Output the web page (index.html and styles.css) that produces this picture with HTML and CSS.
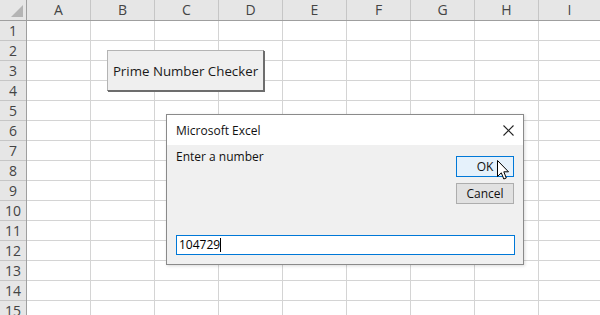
FILE: index.html
```html
<!DOCTYPE html>
<html lang="en">
<head>
    <meta charset="UTF-8">
    <title>Prime Number Checker</title>
    <link rel="stylesheet" href="styles.css">
</head>
<body>
    <div class="sheet">
        <div class="corner"><span class="corner-mark"></span></div>
        <div class="col-heads">
            <div class="col-head">A</div>
            <div class="col-head">B</div>
            <div class="col-head">C</div>
            <div class="col-head">D</div>
            <div class="col-head">E</div>
            <div class="col-head">F</div>
            <div class="col-head">G</div>
            <div class="col-head">H</div>
            <div class="col-head last">I</div>
        </div>
        <div class="row-heads">
            <div class="row-head">1</div>
            <div class="row-head">2</div>
            <div class="row-head">3</div>
            <div class="row-head">4</div>
            <div class="row-head">5</div>
            <div class="row-head">6</div>
            <div class="row-head">7</div>
            <div class="row-head">8</div>
            <div class="row-head">9</div>
            <div class="row-head">10</div>
            <div class="row-head">11</div>
            <div class="row-head">12</div>
            <div class="row-head">13</div>
            <div class="row-head">14</div>
            <div class="row-head">15</div>
        </div>
        <div class="cells"></div>

        <button class="macro-btn" type="button">Prime Number Checker</button>

        <div class="dialog">
            <div class="dlg-title">
                <span>Microsoft Excel</span>
                <svg class="dlg-close" width="11" height="11" viewBox="0 0 11 11">
                    <path d="M0.5 0.5 L10.5 10.5 M10.5 0.5 L0.5 10.5" stroke="#222" stroke-width="1.1" fill="none"/>
                </svg>
            </div>
            <div class="dlg-body">
                <div class="dlg-top">
                    <div class="prompt">Enter a number</div>
                    <div class="dlg-buttons">
                        <div class="dlg-btn ok">OK</div>
                        <div class="dlg-btn">Cancel</div>
                    </div>
                </div>
                <div class="dlg-input">104729<span class="caret"></span></div>
            </div>
            <svg class="pointer" width="13" height="21" viewBox="0 0 13 21">
                <path d="M0.5 0.5 L0.5 16.5 L4.3 12.8 L6.8 19 L9.3 18 L6.8 11.8 L11.5 11.8 Z" fill="#fff" stroke="#000" stroke-width="1" stroke-linejoin="miter"/>
            </svg>
        </div>
    </div>
</body>
</html>
```

FILE: styles.css
```css
body {
    margin: 0;
    background-color: #ffffff;
    font-family: "Open Sans", "Noto Sans", sans-serif;
    overflow: hidden;
}
.sheet {
    position: relative;
    display: grid;
    grid-template-columns: 27px 1fr;
    grid-template-rows: 21px 294px;
    width: 600px;
    height: 315px;
    overflow: hidden;
}
.corner {
    position: relative;
    background-color: #e6e6e6;
    border-right: 1px solid #9f9f9f;
    border-bottom: 1px solid #9f9f9f;
    box-sizing: border-box;
}
.corner-mark {
    position: absolute;
    right: 3px;
    bottom: 3px;
    width: 0;
    height: 0;
    border-left: 12px solid transparent;
    border-bottom: 12px solid #b4b4b4;
}
.col-heads {
    display: flex;
    background-color: #e6e6e6;
    border-bottom: 1px solid #9f9f9f;
}
.col-head {
    flex: 0 0 64px;
    box-sizing: border-box;
    border-right: 1px solid #c6c6c6;
    text-align: center;
    font-size: 14px;
    line-height: 20px;
    color: #444;
}
.col-head.last {
    flex: 1;
    border-right: none;
}
.row-heads {
    display: flex;
    flex-direction: column;
    background-color: #e6e6e6;
    border-right: 1px solid #9f9f9f;
    overflow: hidden;
}
.row-head {
    flex: 0 0 20px;
    box-sizing: border-box;
    border-bottom: 1px solid #c6c6c6;
    text-align: center;
    font-size: 14px;
    line-height: 19px;
    color: #444;
}
.cells {
    background-image:
        linear-gradient(to right, transparent 63px, #d4d4d4 63px),
        linear-gradient(to bottom, transparent 19px, #d4d4d4 19px);
    background-size: 64px 20px;
}
.macro-btn {
    position: absolute;
    left: 107px;
    top: 50px;
    width: 157px;
    height: 41px;
    padding: 0;
    background-color: #efefef;
    border: 1px solid #b4b4b4;
    border-right-color: #6d6d6d;
    border-bottom-color: #6d6d6d;
    box-shadow: 1px 1px 0 #6d6d6d;
    font-family: "Open Sans", sans-serif;
    font-size: 13.3px;
    color: #1a1a1a;
}
.dialog {
    position: absolute;
    left: 166px;
    top: 114px;
    width: 358px;
    height: 151px;
    box-sizing: border-box;
    border: 1px solid #8a8a8a;
    background-color: #f0f0f0;
    box-shadow: 1px 1px 3px rgba(0, 0, 0, 0.15);
    font-family: "Open Sans", sans-serif;
    font-size: 12px;
    color: #111;
    display: flex;
    flex-direction: column;
}
.dlg-title {
    height: 30px;
    background-color: #ffffff;
    display: flex;
    align-items: center;
    justify-content: space-between;
    padding: 0 9px 0 9px;
}
.dlg-body {
    flex: 1;
    display: flex;
    flex-direction: column;
    padding: 3px 8px 9px 9px;
}
.dlg-top {
    display: flex;
    justify-content: space-between;
}
.prompt {
    line-height: 18px;
}
.dlg-buttons {
    display: flex;
    flex-direction: column;
    gap: 6px;
    margin-top: 8px;
    margin-right: 1px;
}
.dlg-btn {
    width: 58px;
    height: 21px;
    box-sizing: border-box;
    border: 1px solid #adadad;
    background-color: #e1e1e1;
    text-align: center;
    line-height: 19px;
}
.dlg-btn.ok {
    border-color: #0078d7;
    background-color: #e5f1fb;
}
.dlg-input {
    margin-top: auto;
    height: 20px;
    box-sizing: border-box;
    border: 1px solid #0078d7;
    background-color: #ffffff;
    padding-left: 2px;
    line-height: 18px;
    color: #000;
}
.caret {
    display: inline-block;
    width: 1px;
    height: 14px;
    background-color: #000;
    vertical-align: -3px;
}
.pointer {
    position: absolute;
    left: 330px;
    top: 45px;
}
```
